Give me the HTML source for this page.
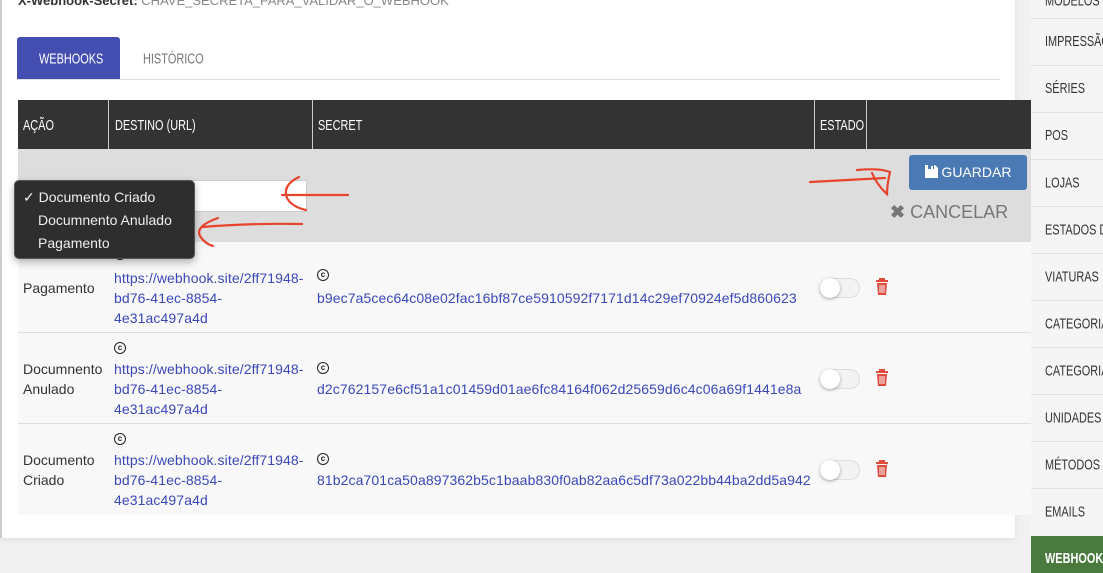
<!DOCTYPE html>
<html><head><meta charset="utf-8"><style>
*{margin:0;padding:0;box-sizing:border-box}
body{width:1103px;height:573px;overflow:hidden;background:#f1f1f1;font-family:"Liberation Sans",sans-serif;position:relative}
.card{position:absolute;left:0;top:-10px;width:1015px;height:548px;background:#fff;border-left:2px solid #ccc;box-shadow:0 2px 6px rgba(0,0,0,.08)}
.abs{position:absolute}
.cn{display:inline-block;transform:scale(0.78,1.05);transform-origin:left center;white-space:nowrap}
.side{position:absolute;left:1031px;top:0;width:72px;height:573px;background:#f5f5f5;overflow:hidden}
.si{position:absolute;left:14px;font-size:14px;color:#333;white-space:nowrap;transform:scale(0.78,1.05);transform-origin:left center}
.sep{position:absolute;left:0;width:72px;height:1px;background:#e2e2e2}
.th{position:absolute;top:117px;color:#fff;font-size:14px;transform:scale(0.78,1.05);transform-origin:left center;white-space:nowrap}
.vl{position:absolute;top:100px;height:49px;width:1px;background:#ccc}
.row{position:absolute;left:18px;width:1013px;background:#f8f8f8;border-bottom:1px solid #ddd}
.t{position:absolute;font-size:14px;line-height:20px;color:#333}
.l{position:absolute;font-size:14px;line-height:20px;color:#3a48b8;letter-spacing:.1px}
.c{position:absolute;width:12px;height:12px;border:1.6px solid #222;border-radius:50%;font-size:8px;font-weight:bold;line-height:9px;text-align:center;color:#222}
.tog{position:absolute;width:40px;height:20px;border:1px solid #ddd;border-radius:10px;background:#f3f3f3}
.tog:after{content:"";position:absolute;left:-1px;top:-1px;width:20px;height:20px;border-radius:50%;background:#fff;box-shadow:0 1px 3px rgba(0,0,0,.35)}
</style></head><body>
<div class="card"></div>
<div class="abs" style="left:18px;top:-7px;font-size:13px;color:#333"><b>X-Webhook-Secret:</b> <span style="color:#888">CHAVE_SECRETA_PARA_VALIDAR_O_WEBHOOK</span></div>
<div class="abs" style="left:17px;top:37px;width:103px;height:42px;background:#434eb0;border-radius:3px 3px 0 0;color:#fff;font-size:14px;line-height:42px;padding-left:22px"><span class="cn">WEBHOOKS</span></div>
<div class="abs" style="left:143px;top:37px;height:42px;color:#777;font-size:14px;line-height:42px"><span class="cn">HISTÓRICO</span></div>
<div class="abs" style="left:17px;top:79px;width:983px;height:1px;background:#ddd"></div>

<div class="abs" style="left:18px;top:100px;width:1013px;height:49px;background:#333"></div>
<div class="vl" style="left:108px"></div><div class="vl" style="left:312px"></div><div class="vl" style="left:814px"></div><div class="vl" style="left:866px"></div>
<div class="th" style="left:23px">AÇÃO</div><div class="th" style="left:115px">DESTINO (URL)</div><div class="th" style="left:318px">SECRET</div><div class="th" style="left:820px">ESTADO</div>

<div class="abs" style="left:18px;top:149px;width:1013px;height:93px;background:#ddd"></div>
<div class="abs" style="left:190px;top:180px;width:117px;height:32px;background:#fff;border:1px solid #ccc"></div>
<div class="abs" style="left:909px;top:155px;width:118px;height:35px;background:#4a79b4;border-radius:3px;color:#fff;font-size:14px;line-height:35px;text-align:center">
<svg width="13" height="13" viewBox="0 0 13 13" style="vertical-align:-1px"><path d="M0 0H10L13 3V13H0Z M3 0V4H9V0" fill="#fff"/><rect x="3" y="1" width="5" height="3" fill="#4a79b4"/><rect x="6" y="1" width="2" height="3" fill="#fff"/></svg> GUARDAR</div>
<div class="abs" style="left:890px;top:202px;color:#777;font-size:18px"><b>✖</b> CANCELAR</div>

<div class="row" style="top:242px;height:91px"></div>
<div class="row" style="top:333px;height:91px"></div>
<div class="row" style="top:424px;height:91px;border-bottom:none"></div>

<div class="t" style="left:23px;top:278px">Pagamento</div>
<div class="c" style="left:114px;top:248px">c</div>
<div class="l" style="left:114px;top:268px">https://webhook.site/2ff71948-<br>bd76-41ec-8854-<br>4e31ac497a4d</div>
<div class="c" style="left:317px;top:269px">c</div>
<div class="l" style="left:317px;top:288px">b9ec7a5cec64c08e02fac16bf87ce5910592f7171d14c29ef70924ef5d860623</div>
<div class="tog" style="left:820px;top:278px"></div>

<div class="t" style="left:23px;top:359px">Documnento<br>Anulado</div>
<div class="c" style="left:114px;top:342px">c</div>
<div class="l" style="left:114px;top:359px">https://webhook.site/2ff71948-<br>bd76-41ec-8854-<br>4e31ac497a4d</div>
<div class="c" style="left:317px;top:362px">c</div>
<div class="l" style="left:317px;top:379px">d2c762157e6cf51a1c01459d01ae6fc84164f062d25659d6c4c06a69f1441e8a</div>
<div class="tog" style="left:820px;top:369px"></div>

<div class="t" style="left:23px;top:450px">Documento<br>Criado</div>
<div class="c" style="left:114px;top:433px">c</div>
<div class="l" style="left:114px;top:450px">https://webhook.site/2ff71948-<br>bd76-41ec-8854-<br>4e31ac497a4d</div>
<div class="c" style="left:317px;top:453px">c</div>
<div class="l" style="left:317px;top:470px">81b2ca701ca50a897362b5c1baab830f0ab82aa6c5df73a022bb44ba2dd5a942</div>
<div class="tog" style="left:820px;top:460px"></div>

<svg class="abs" style="left:0;top:0" width="1103" height="573">
<g fill="#e04a3c"><rect x="876" y="280" width="12" height="2"/><rect x="879" y="278" width="6" height="2"/><path d="M877 283H887L886 295H878Z"/>
<rect x="876" y="371" width="12" height="2"/><rect x="879" y="369" width="6" height="2"/><path d="M877 374H887L886 386H878Z"/>
<rect x="876" y="462" width="12" height="2"/><rect x="879" y="460" width="6" height="2"/><path d="M877 465H887L886 477H878Z"/></g>
<g stroke="#f8f8f8" stroke-width="1"><path d="M880 285V293M882 285V293M884 285V293M880 376V384M882 376V384M884 376V384M880 467V475M882 467V475M884 467V475"/></g>
<g fill="none" stroke="#e8442d" stroke-width="2.2" stroke-linecap="round">
<path d="M282 195 L348 195"/><path d="M299 177 Q282 185 287 198 Q292 207 306 210"/>
<path d="M202 227 Q250 223 302 224"/><path d="M218 218 Q195 226 200 236 Q205 244 213 246"/>
<path d="M810 182 Q850 180 885 178"/><path d="M857 170 Q880 168 890 172 Q887 185 887 194 Q877 185 872 173"/>
</g></svg>

<div class="abs" style="left:14px;top:180px;width:181px;height:79px;background:#2e2e2e;border:1px solid #555;border-radius:5px;box-shadow:0 3px 8px rgba(0,0,0,.3);color:#eee;font-size:14px;line-height:23px;padding-top:5px">
<div style="padding-left:8px">✓ Documento Criado</div><div style="padding-left:23px">Documnento Anulado</div><div style="padding-left:23px">Pagamento</div></div>

<div class="side">
<div class="si" style="top:-8px">MODELOS</div>
<div class="sep" style="top:18px"></div><div class="si" style="top:33px">IMPRESSÃO</div>
<div class="sep" style="top:65px"></div><div class="si" style="top:80px">SÉRIES</div>
<div class="sep" style="top:112px"></div><div class="si" style="top:127px">POS</div>
<div class="sep" style="top:159px"></div><div class="si" style="top:174px">LOJAS</div>
<div class="sep" style="top:206px"></div><div class="si" style="top:221px">ESTADOS DE</div>
<div class="sep" style="top:253px"></div><div class="si" style="top:268px">VIATURAS</div>
<div class="sep" style="top:300px"></div><div class="si" style="top:315px">CATEGORIAS</div>
<div class="sep" style="top:347px"></div><div class="si" style="top:362px">CATEGORIAS</div>
<div class="sep" style="top:394px"></div><div class="si" style="top:409px">UNIDADES DE</div>
<div class="sep" style="top:441px"></div><div class="si" style="top:456px">MÉTODOS DE</div>
<div class="sep" style="top:488px"></div><div class="si" style="top:503px">EMAILS</div>
<div class="abs" style="left:0;top:536px;width:72px;height:37px;background:#4b7a3f"></div>
<div class="si" style="top:550px;color:#fff;font-weight:bold">WEBHOOKS</div>
</div>
</body></html>
